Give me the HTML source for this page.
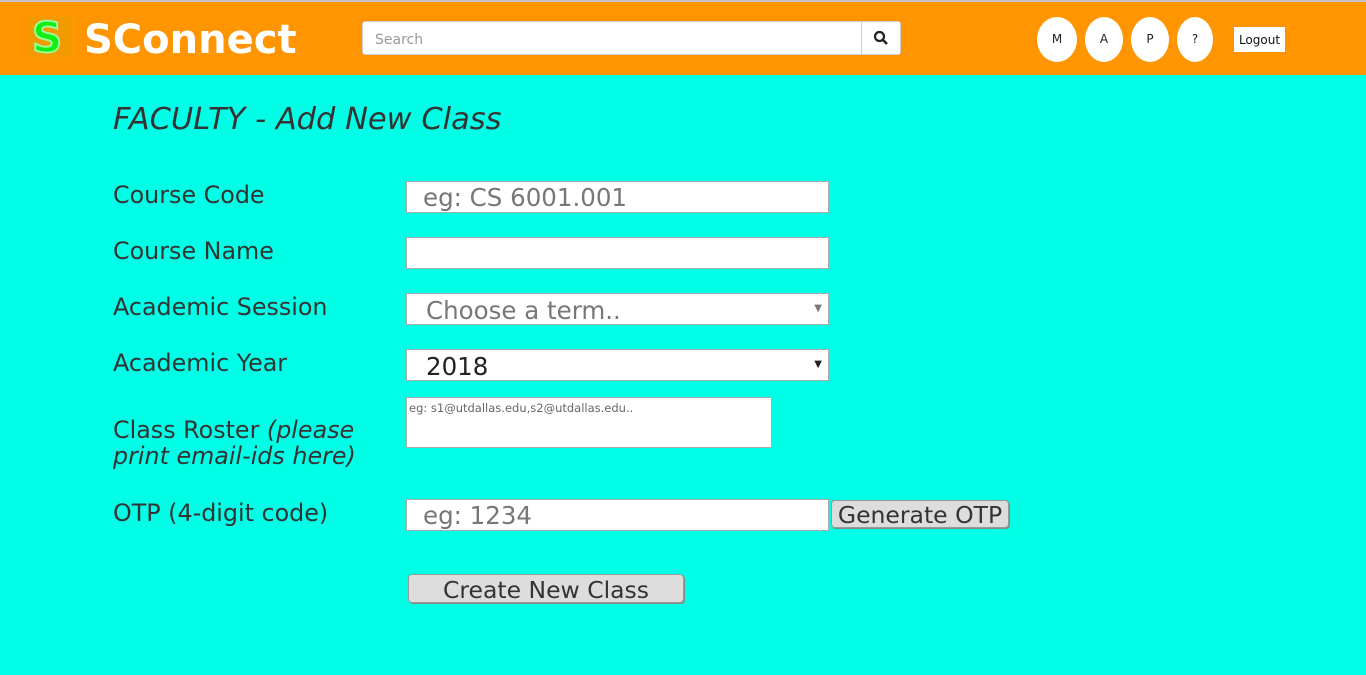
<!DOCTYPE html>
<html><head><meta charset="utf-8"><style>
*{box-sizing:border-box}
body{margin:0;width:1366px;height:675px;background:#00ffe6;font-family:"DejaVu Sans",Verdana,sans-serif;color:#333;position:relative;overflow:hidden}
.hdr{position:absolute;left:0;top:0;width:1366px;height:75px;background:#ff9500;border-top:2px solid #c4c4c4}
.abs{position:absolute}
.lbl{position:absolute;left:113px;font-size:23.8px;color:#333}
.inp{position:absolute;left:406px;width:423px;height:32px;background:#fff;border:1px solid #aaa;font-size:24.5px;color:#777;padding-left:16px;line-height:30px;white-space:nowrap}
.sel{padding-left:19px}
.arr{position:absolute;right:6px;top:0;font-size:10px;color:#777}
.btn{position:absolute;background:#ddd;border:1px solid #999;border-radius:4px;box-shadow:1px 1px 0 #888;font-size:23.5px;color:#333;text-align:center;line-height:28px}
.c{position:absolute;top:17px;height:45px;background:#fff;border-radius:50%;font-size:12px;color:#222;text-align:center;line-height:45px}
</style></head><body>
<div class="hdr">
 <div class="abs" style="left:28px;top:15px;width:46px;height:40px;background:#f39a00;border-right:1px solid #e0a050"></div>
 <div class="abs" style="left:32px;top:12px;font-size:42px;font-weight:bold;color:#11ee11;-webkit-text-stroke:2px #9f9;line-height:48px">S</div>
 <div class="abs" style="left:84px;top:14px;font-size:40px;font-weight:bold;color:#fff;line-height:48px">SConnect</div>
 <div class="abs" style="left:362px;top:19px;width:539px;height:34px;background:#fff;border:1px solid #ccc;border-radius:3px"></div>
 <div class="abs" style="left:375px;top:30px;font-size:14px;color:#999">Search</div>
 <div class="abs" style="left:861px;top:20px;width:1px;height:32px;background:#ccc"></div>
 <svg class="abs" style="left:873px;top:28px" width="16" height="16" viewBox="0 0 16 16"><circle cx="6.5" cy="6.5" r="4.5" fill="none" stroke="#222" stroke-width="2.2"/><path d="M10 10 L14 14" stroke="#222" stroke-width="2.6"/></svg>
 <div class="c" style="left:1037px;width:40px;top:15px">M</div>
 <div class="c" style="left:1085px;width:38px;top:15px">A</div>
 <div class="c" style="left:1131px;width:38px;top:15px">P</div>
 <div class="c" style="left:1177px;width:36px;top:15px">?</div>
 <div class="abs" style="left:1234px;top:25px;width:51px;height:25px;background:#fff;font-size:12px;color:#111;text-align:center;line-height:27px">Logout</div>
</div>
<div class="abs" style="left:113px;top:102px;font-size:30.5px;font-style:italic;color:#333">FACULTY - Add New Class</div>
<div class="lbl" style="top:181px">Course Code</div>
<div class="lbl" style="top:237px">Course Name</div>
<div class="lbl" style="top:293px">Academic Session</div>
<div class="lbl" style="top:349px">Academic Year</div>
<div class="lbl" style="top:417px;line-height:26px">Class Roster <i>(please<br>print email-ids here)</i></div>
<div class="lbl" style="top:499px">OTP (4-digit code)</div>
<div class="inp" style="top:181px;line-height:32px">eg: CS 6001.001</div>
<div class="inp" style="top:237px"></div>
<div class="inp sel" style="top:293px;line-height:34px">Choose a term..<span class="arr" style="line-height:30px">▼</span></div>
<div class="inp sel" style="top:349px;color:#222;line-height:34px">2018<span class="arr" style="line-height:30px;color:#222">▼</span></div>
<div class="abs" style="left:406px;top:397px;width:366px;height:51px;background:#fff;border:1px solid #aaa;font-size:11.5px;color:#666;padding:3px 2px">eg: s1@utdallas.edu,s2@utdallas.edu..</div>
<div class="inp" style="top:499px;line-height:32px">eg: 1234</div>
<div class="btn" style="left:831px;top:500px;width:178px;height:28px">Generate OTP</div>
<div class="btn" style="left:408px;top:574px;width:276px;height:29px;line-height:30px">Create New Class</div>
</body></html>
